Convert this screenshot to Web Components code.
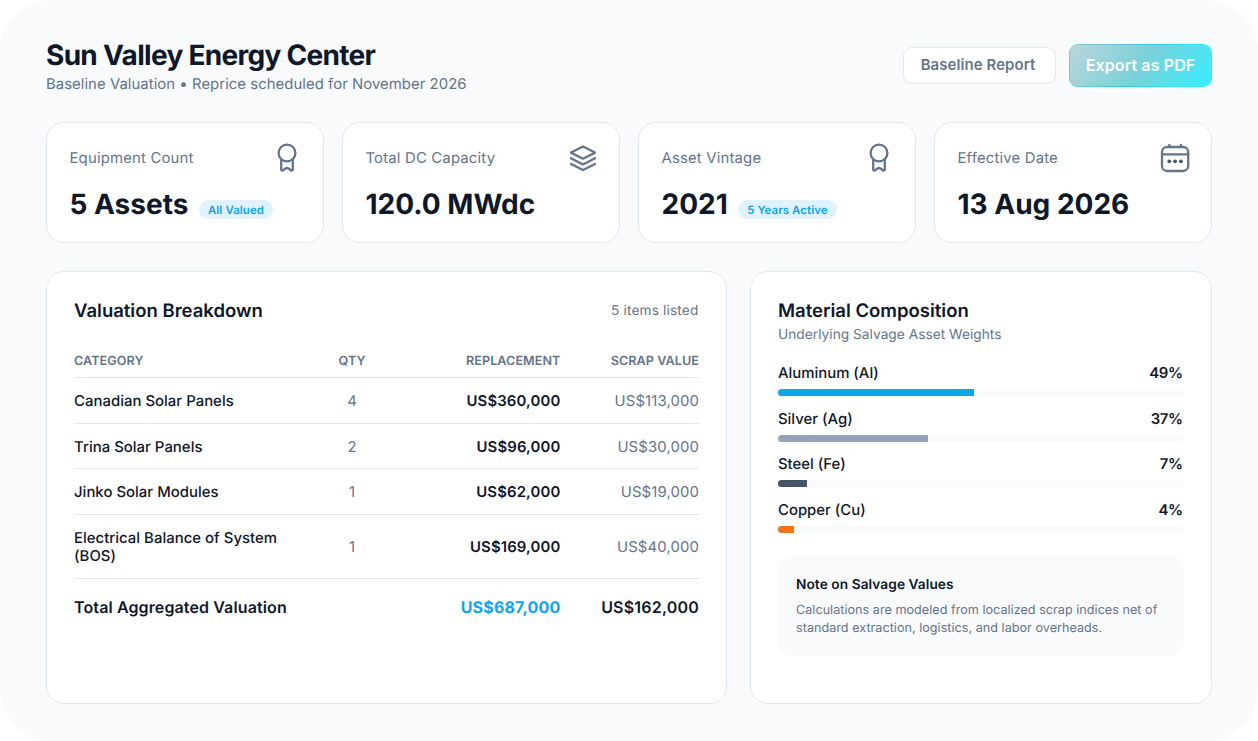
<!DOCTYPE html>
<html lang="en">
<head>
<meta charset="utf-8">
<title>Sun Valley Energy Center</title>
<style>
html, body { margin: 0; background: #fff; }
body { font-family: Inter, "Liberation Sans", sans-serif; color: #0f172a; overflow: hidden; text-rendering: geometricPrecision;
  --line: #e2e8f0; --muted: #64748b; --ink: #0f172a; --soft: #f8fafc; --accent: #0ea5e9; }
</style>
</head>
<body>
<valuation-page>
  <page-header slot="header" heading="Sun Valley Energy Center" sub="Baseline Valuation • Reprice scheduled for November 2026">
    <action-button>Baseline Report</action-button>
    <action-button primary>Export as PDF</action-button>
  </page-header>
  <stat-card slot="stats" label="Equipment Count" badge="All Valued" icon="award">5 Assets</stat-card>
  <stat-card slot="stats" label="Total DC Capacity" icon="layers">120.0 MWdc</stat-card>
  <stat-card slot="stats" label="Asset Vintage" badge="5 Years Active" icon="award">2021</stat-card>
  <stat-card slot="stats" label="Effective Date" icon="calendar">13 Aug 2026</stat-card>
  <panel-card slot="panels" heading="Valuation Breakdown">
    <span slot="aside">5 items listed</span>
    <valuation-table></valuation-table>
  </panel-card>
  <panel-card slot="panels" heading="Material Composition" sub="Underlying Salvage Asset Weights">
    <material-bar name="Aluminum (Al)" value="49%" fill="48.3%" color="#0ea5e9"></material-bar>
    <material-bar name="Silver (Ag)" value="37%" fill="37%" color="#94a3b8"></material-bar>
    <material-bar name="Steel (Fe)" value="7%" fill="7.1%" color="#475569"></material-bar>
    <material-bar name="Copper (Cu)" value="4%" fill="4%" color="#f97316"></material-bar>
    <note-box heading="Note on Salvage Values">Calculations are modeled from localized scrap indices net of standard extraction, logistics, and labor overheads.</note-box>
  </panel-card>
</valuation-page>
<script>
const define = (name, render) => customElements.define(name, class extends HTMLElement {
  constructor() { super(); this.attachShadow({ mode: 'open' }); }
  connectedCallback() {
    this.shadowRoot.innerHTML = '<style>*{box-sizing:border-box}:host{box-sizing:border-box}</style>' + render(n => this.getAttribute(n) || '');
  }
});

define('valuation-page', () => `
<style>
:host { display: block; width: 1258px; height: 741px; padding: 43.5px 46px 0; background: var(--soft); border-radius: 52px; }
.stats { display: grid; grid-template-columns: repeat(4, 1fr); gap: 18px; margin-top: 34.5px; height: 121px; }
.panels { display: grid; grid-template-columns: 681px 1fr; gap: 23px; margin-top: 28px; height: 433px; }
</style>
<slot name="header"></slot>
<div class="stats"><slot name="stats"></slot></div>
<div class="panels"><slot name="panels"></slot></div>`);

define('page-header', a => `
<style>
:host { display: flex; justify-content: space-between; align-items: flex-start; height: 43.5px; }
h1 { margin: -6px 0 0; font-size: 28px; line-height: 34px; font-weight: 700; letter-spacing: -0.7px; white-space: nowrap; }
p { margin: 3.4px 0 0; font-size: 14.9px; line-height: 18px; letter-spacing: 0.04px; color: var(--muted); white-space: nowrap; }
.actions { display: flex; gap: 13.5px; align-items: center; }
</style>
<div><h1>${a('heading')}</h1><p>${a('sub')}</p></div>
<div class="actions"><slot></slot></div>`);

define('action-button', () => `
<style>
:host { display: block; }
button { display: flex; align-items: center; justify-content: center; margin: 0; padding: 0 2px 0 0; width: 153px; height: 37px;
  font: 600 14.9px/18px Inter, sans-serif; letter-spacing: 0.12px; color: var(--muted); background: #fff; border: 1px solid var(--line); border-radius: 9px; white-space: nowrap; }
:host([primary]) button { width: 143px; height: 43px; padding: 0; font-size: 16px; color: #fff; border: 1px solid transparent;
  background: linear-gradient(125deg, #bbd5da 0%, #7bd1da 50%, #38ecff 98%) padding-box, linear-gradient(125deg, #8fc9cf 0%, #3cc5d8 50%, #3ae8fb 80%) border-box;
  box-shadow: 0 1px 2px rgba(15,23,42,.06); }
</style>
<button><slot></slot></button>`);

const ICONS = {
  award: `<circle cx="15" cy="10" r="8.4"/><path d="M9.2 16.6v9.8c0 1 1 1.5 1.8.9l2.5-1.8q1.5-1 3 0l2.5 1.8c.8.6 1.8.1 1.8-.9V16.6"/>`,
  layers: `<path d="M15 3.4 27 9.6 15 15.7 3 9.6z"/><path d="M3 15.2l12 6.2 12-6.2"/><path d="M3 20.9l12 6.2 12-6.2"/>`,
  calendar: `<rect x="2" y="4" width="26.2" height="24" rx="5"/><path d="M2 11.3h26.2M9.3 2v2M20.9 2v2"/><g fill="#475569" stroke="none"><circle cx="9.3" cy="18.3" r="1.9"/><circle cx="15.1" cy="18.3" r="1.9"/><circle cx="20.9" cy="18.3" r="1.9"/></g>`
};

define('stat-card', a => `
<style>
:host { display: flex; flex-direction: column; background: #fff; border: 1px solid var(--line); border-radius: 18px; padding: 19px 20.5px 0 22.5px; }
.top { display: flex; justify-content: space-between; align-items: center; height: 32px; }
.label { font-size: 14.9px; line-height: 18px; letter-spacing: 0.17px; color: var(--muted); white-space: nowrap; }
svg { display: block; width: 32px; height: 32px; }
.bottom { display: flex; align-items: flex-start; gap: 10.5px; margin-top: 12.5px; }
.value { font-size: 28px; line-height: 36px; font-weight: 700; white-space: nowrap; }
.badge { height: 19px; margin-top: 13.5px; padding: 0 9px; border-radius: 10px; background: #e0f2fe; color: var(--accent);
  font-size: 11.4px; line-height: 20px; letter-spacing: 0.1px; font-weight: 600; white-space: nowrap; }
</style>
<div class="top"><span class="label">${a('label')}</span>
<svg viewBox="-1 -1 32 32" fill="none" stroke="#64748b" stroke-width="2.3" stroke-linecap="round" stroke-linejoin="round">${ICONS[a('icon')]}</svg></div>
<div class="bottom"><span class="value"><slot></slot></span>${a('badge') ? `<span class="badge">${a('badge')}</span>` : ''}</div>`);

define('panel-card', a => `
<style>
:host { display: block; background: #fff; border: 1px solid var(--line); border-radius: 18px; padding: 27px 27px 0; }
header { display: flex; justify-content: space-between; align-items: center; height: 25px; }
h2 { margin: 0; font-size: 18.5px; line-height: 24px; font-weight: 600; white-space: nowrap; }
.aside { font-size: 13.7px; line-height: 18px; letter-spacing: 0.15px; padding-right: .5px; color: var(--muted); }
p { margin: 2px 0 20.4px; font-size: 13.7px; line-height: 18px; height: 18px; letter-spacing: 0.03px; color: var(--muted); }
</style>
<header><h2>${a('heading')}</h2><span class="aside"><slot name="aside"></slot></span></header>
${a('sub') ? `<p>${a('sub')}</p>` : ''}
<slot></slot>`);

const ROWS = [
  ['Canadian Solar Panels', 4, 'US$360,000', 'US$113,000'],
  ['Trina Solar Panels', 2, 'US$96,000', 'US$30,000'],
  ['Jinko Solar Modules', 1, 'US$62,000', 'US$19,000'],
  ['Electrical Balance of System (BOS)', 1, 'US$169,000', 'US$40,000']
];
define('valuation-table', () => `
<style>
:host { display: block; margin-top: 19px; }
.row { display: grid; grid-template-columns: 232px 92px 162.5px 138.5px; align-items: center; padding: 13.9px 0 12.6px;
  border-bottom: 1px solid var(--line); font-size: 14.9px; line-height: 18.3px; letter-spacing: 0.03px; font-weight: 500; }
.row > :nth-child(2) { text-align: center; color: var(--muted); font-weight: 400; }
.row > :nth-child(3) { text-align: right; font-weight: 600; letter-spacing: 0.15px; }
.row > :nth-child(4) { text-align: right; color: var(--muted); font-weight: 400; letter-spacing: 0.12px; }
.row.head { height: 35.4px; padding: 5px 0 0; font-size: 12.6px; }
.row.head > * { color: var(--muted); font-weight: 600; letter-spacing: 0.07px; }
.row.total { border: 0; font-size: 16px; font-weight: 600; height: 57px; padding: 0 0 .4px; white-space: nowrap; letter-spacing: 0.12px; }
.row.total > :nth-child(3) { color: var(--accent); font-weight: 700; letter-spacing: 0.18px; }
.row.total > :nth-child(4) { color: var(--ink); font-weight: 600; letter-spacing: 0.2px; }
</style>
<div class="row head"><span>CATEGORY</span><span>QTY</span><span>REPLACEMENT</span><span>SCRAP VALUE</span></div>
${ROWS.map(r => `<div class="row">${r.map(c => `<span>${c}</span>`).join('')}</div>`).join('')}
<div class="row total"><span>Total Aggregated Valuation</span><span></span><span>US$687,000</span><span>US$162,000</span></div>`);

define('material-bar', a => `
<style>
:host { display: block; height: 45.7px; width: 406px; }
.line { display: flex; justify-content: space-between; height: 18.3px; font-size: 14.9px; line-height: 18.8px; font-weight: 500; padding-right: 1.5px; }
b { font-weight: 600; letter-spacing: -0.4px; }
.track { height: 7px; margin-top: 6.8px; border-radius: 4px; background: var(--soft); overflow: hidden; }
.fill { height: 100%; width: ${a('fill')}; background: ${a('color')}; }
</style>
<div class="line"><span>${a('name')}</span><b>${a('value')}</b></div>
<div class="track"><div class="fill"></div></div>`);

define('note-box', a => `
<style>
:host { display: block; width: 406px; height: 100px; margin-top: 9.1px; padding: 19.8px 18px 0; border-radius: 14px; background: var(--soft); }
h3 { margin: 0; font-size: 13.7px; line-height: 18px; letter-spacing: 0.07px; font-weight: 600; }
p { margin: 8px 0 0; font-size: 12.6px; line-height: 18.3px; letter-spacing: 0.03px; color: var(--muted); }
</style>
<h3>${a('heading')}</h3><p><slot></slot></p>`);
</script>
</body>
</html>
